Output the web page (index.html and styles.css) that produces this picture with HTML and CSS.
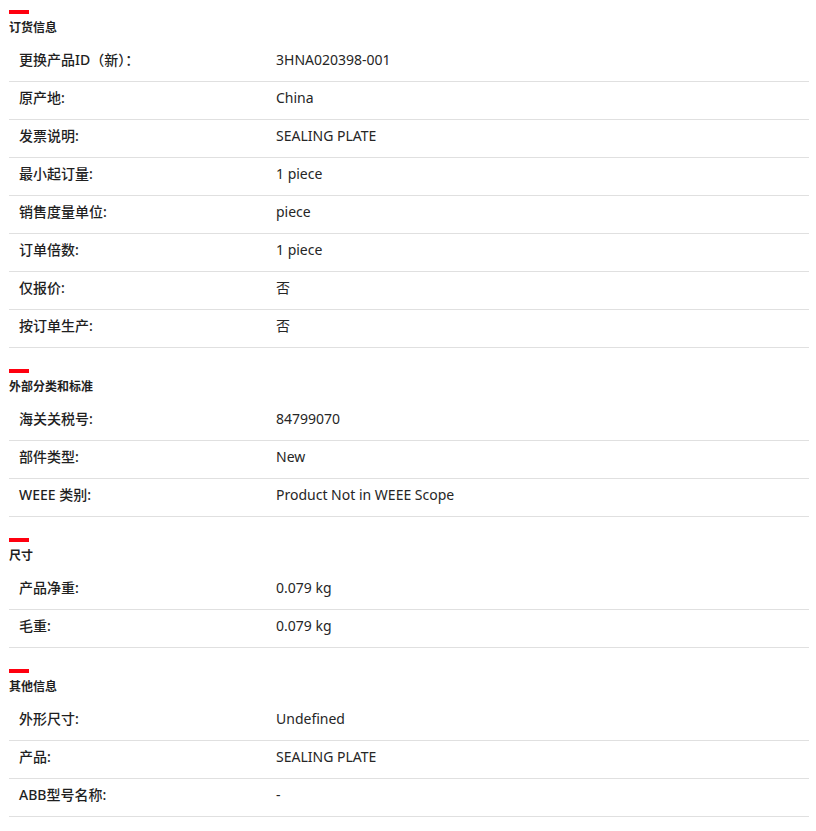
FILE: index.html
```html
<!DOCTYPE html>
<html lang="zh">
<head>
  <meta charset="UTF-8" />
  <meta name="viewport" content="width=device-width, initial-scale=1.0"/>
  <title>产品详情</title>
  <link rel="stylesheet" href="styles.css">
</head>
<body>

  <div class="details">
    <!-- 订货信息 -->
    <div class="section">
      <h3 class="section-title">订货信息</h3>
      <div class="row"><div class="label">更换产品ID（新）：</div><div class="value">3HNA020398-001</div></div>
      <div class="row"><div class="label">原产地:</div><div class="value">China</div></div>
      <div class="row"><div class="label">发票说明:</div><div class="value">SEALING PLATE</div></div>
      <div class="row"><div class="label">最小起订量:</div><div class="value">1 piece</div></div>
      <div class="row"><div class="label">销售度量单位:</div><div class="value">piece</div></div>
      <div class="row"><div class="label">订单倍数:</div><div class="value">1 piece</div></div>
      <div class="row"><div class="label">仅报价:</div><div class="value">否</div></div>
      <div class="row"><div class="label">按订单生产:</div><div class="value">否</div></div>
    </div>

    <!-- 外部分类和标准 -->
    <div class="section">
      <h3 class="section-title">外部分类和标准</h3>
      <div class="row"><div class="label">海关关税号:</div><div class="value">84799070</div></div>
      <div class="row"><div class="label">部件类型:</div><div class="value">New</div></div>
      <div class="row"><div class="label">WEEE 类别:</div><div class="value">Product Not in WEEE Scope</div></div>
    </div>

    <!-- 尺寸 -->
    <div class="section">
      <h3 class="section-title">尺寸</h3>
      <div class="row"><div class="label">产品净重:</div><div class="value">0.079 kg</div></div>
      <div class="row"><div class="label">毛重:</div><div class="value">0.079 kg</div></div>
    </div>

    <!-- 其他信息 -->
    <div class="section">
      <h3 class="section-title">其他信息</h3>
      <div class="row"><div class="label">外形尺寸:</div><div class="value">Undefined</div></div>
      <div class="row"><div class="label">产品:</div><div class="value">SEALING PLATE</div></div>
      <div class="row"><div class="label">ABB型号名称:</div><div class="value">-</div></div>
    </div>
  </div>

</body>
</html>
```

FILE: styles.css
```css
* { margin: 0; padding: 0; box-sizing: border-box; }
body {
  font-family: "Noto Sans", "Noto Sans CJK SC", sans-serif;
  color: #1f1f1f;
  background-color: #ffffff;
}
.details { width: 800px; margin-left: 9px; padding-top: 10px; }
.section { padding-bottom: 21px; }
.section-title {
  font-size: 12px;
  font-weight: bold;
  line-height: 16px;
  margin-bottom: 8px;
}
.section-title::before {
  content: "";
  display: block;
  width: 20px;
  height: 4px;
  background-color: #ff000f;
  margin-bottom: 6px;
}
.row {
  display: grid;
  grid-template-columns: 267px 1fr;
  font-size: 14px;
  line-height: 20px;
  padding: 6px 0 11px;
  border-bottom: 1px solid #e0e0e0;
}
.label { padding-left: 10px; font-weight: 500; }
.value { color: #262626; }
```
